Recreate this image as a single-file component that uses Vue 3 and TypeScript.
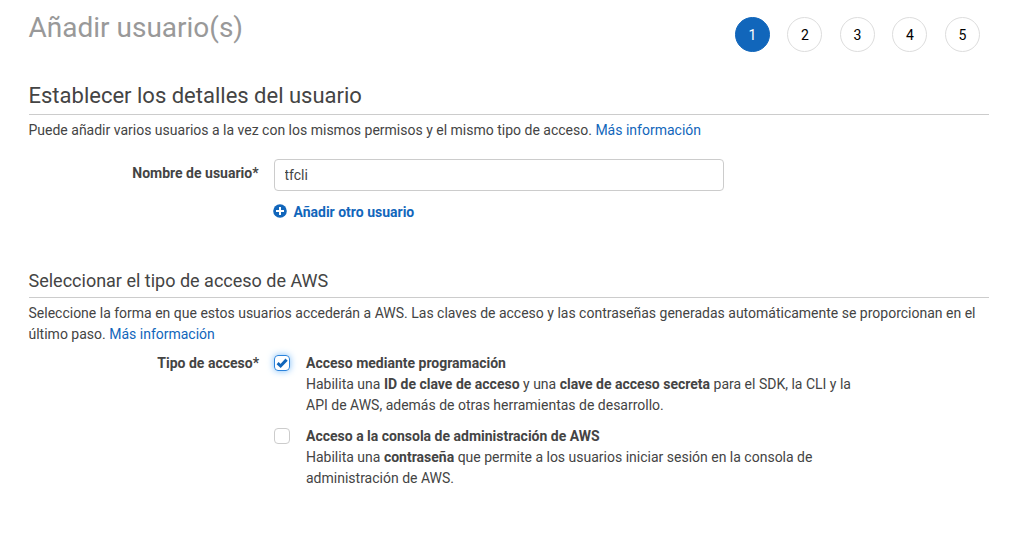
<script setup lang="ts">
import { ref } from 'vue'

const steps: number[] = [1, 2, 3, 4, 5]
const current = ref<number>(1)
const userName = ref<string>('tfcli')
const programmatic = ref<boolean>(true)
const consoleAccess = ref<boolean>(false)
</script>

<template>
  <main class="page">
    <header class="top">
      <h1>Añadir usuario(s)</h1>
      <ol class="steps">
        <li v-for="s in steps" :key="s" :class="{ active: s === current }">{{ s }}</li>
      </ol>
    </header>

    <section class="details">
      <h2>Establecer los detalles del usuario</h2>
      <p>Puede añadir varios usuarios a la vez con los mismos permisos y el mismo tipo de acceso. <a>Más información</a></p>
      <div class="row name-row">
        <label class="label" for="user">Nombre de usuario*</label>
        <div class="field">
          <input id="user" v-model="userName" class="text" type="text" />
          <a class="add">
            <svg width="14" height="14" viewBox="0 0 14 14"><circle cx="7" cy="7" r="6.8" fill="#1166bb" /><path d="M7 3v8M3 7h8" stroke="#fff" stroke-width="2" /></svg>
            <span>Añadir otro usuario</span>
          </a>
        </div>
      </div>
    </section>

    <section class="access">
      <h3>Seleccionar el tipo de acceso de AWS</h3>
      <p>Seleccione la forma en que estos usuarios accederán a AWS. Las claves de acceso y las contraseñas generadas automáticamente se proporcionan en el último paso. <a>Más información</a></p>
      <div class="row">
        <div class="label">Tipo de acceso*</div>
        <div class="options">
          <div class="option">
            <span class="box" :class="{ checked: programmatic }" @click="programmatic = !programmatic">
              <svg v-if="programmatic" width="14" height="14" viewBox="0 0 14 14"><path d="M2.6 7.2l3 2.8 6-6.4" fill="none" stroke="#1166bb" stroke-width="3" /></svg>
            </span>
            <div class="desc"><b>Acceso mediante programación</b><br />Habilita una <b>ID de clave de acceso</b> y una <b>clave de acceso secreta</b> para el SDK, la CLI y la API de AWS, además de otras herramientas de desarrollo.</div>
          </div>
          <div class="option">
            <span class="box" :class="{ checked: consoleAccess }" @click="consoleAccess = !consoleAccess">
              <svg v-if="consoleAccess" width="14" height="14" viewBox="0 0 14 14"><path d="M2.6 7.2l3 2.8 6-6.4" fill="none" stroke="#1166bb" stroke-width="3" /></svg>
            </span>
            <div class="desc"><b>Acceso a la consola de administración de AWS</b><br />Habilita una <b>contraseña</b> que permite a los usuarios iniciar sesión en la consola de administración de AWS.</div>
          </div>
        </div>
      </div>
    </section>
  </main>
</template>

<style>
body { background: #fff; }
</style>

<style scoped>
.page { box-sizing: border-box; width: 1015px; height: 533px; padding: 0 26px 0 28.5px; overflow: hidden; font: 14px/21px Roboto, sans-serif; color: #444; }
h1, h2, h3, p, ol { margin: 0; padding: 0; font-weight: 400; }
.top { display: flex; justify-content: space-between; height: 82px; }
h1 { padding-top: 11px; font-size: 28px; line-height: 34px; color: #999; }
.steps { display: flex; gap: 17.5px; list-style: none; padding: 17px 9.2px 0 0; }
.steps li { box-sizing: border-box; width: 35px; height: 35px; border: 1px solid #ddd; border-radius: 50%; text-align: center; line-height: 34px; color: #000; }
.steps li.active { background: #1166bb; border-color: #1166bb; color: #fff; }
.details { height: 184px; }
h2 { height: 32px; border-bottom: 1px solid #ccc; font-size: 22px; line-height: 27px; }
p { padding-top: 5px; }
a { color: #1166bb; text-decoration: none; cursor: pointer; }
.row { display: flex; gap: 15px; }
.name-row { margin-top: 18px; }
.label { width: 230.5px; flex: none; text-align: right; font-weight: 700; }
.name-row .label { width: 230px; padding-top: 4px; }
.text { box-sizing: border-box; display: block; width: 450px; height: 32px; padding: 0 10px; border: 1px solid #ccc; border-radius: 4px; font: 14px Roboto, sans-serif; color: #444; outline: none; }
.add { display: flex; align-items: center; gap: 6px; margin-top: 11px; font-weight: 700; }
.add svg { margin: -3px 0 0 -0.5px; margin-right: 0.5px; }
h3 { height: 31px; border-bottom: 1px solid #ccc; font-size: 18px; line-height: 30px; }
.access .row { margin-top: 8px; }
.option { display: flex; gap: 16px; margin-bottom: 10px; }
.box { box-sizing: border-box; flex: none; width: 16px; height: 16px; margin-top: 2px; border: 1px solid #ccc; border-radius: 4px; }
.box.checked { border-color: #2b83dc; box-shadow: 0 0 7px #7bbcf8; }
.box svg { display: block; }
.desc { width: 560px; }
</style>
